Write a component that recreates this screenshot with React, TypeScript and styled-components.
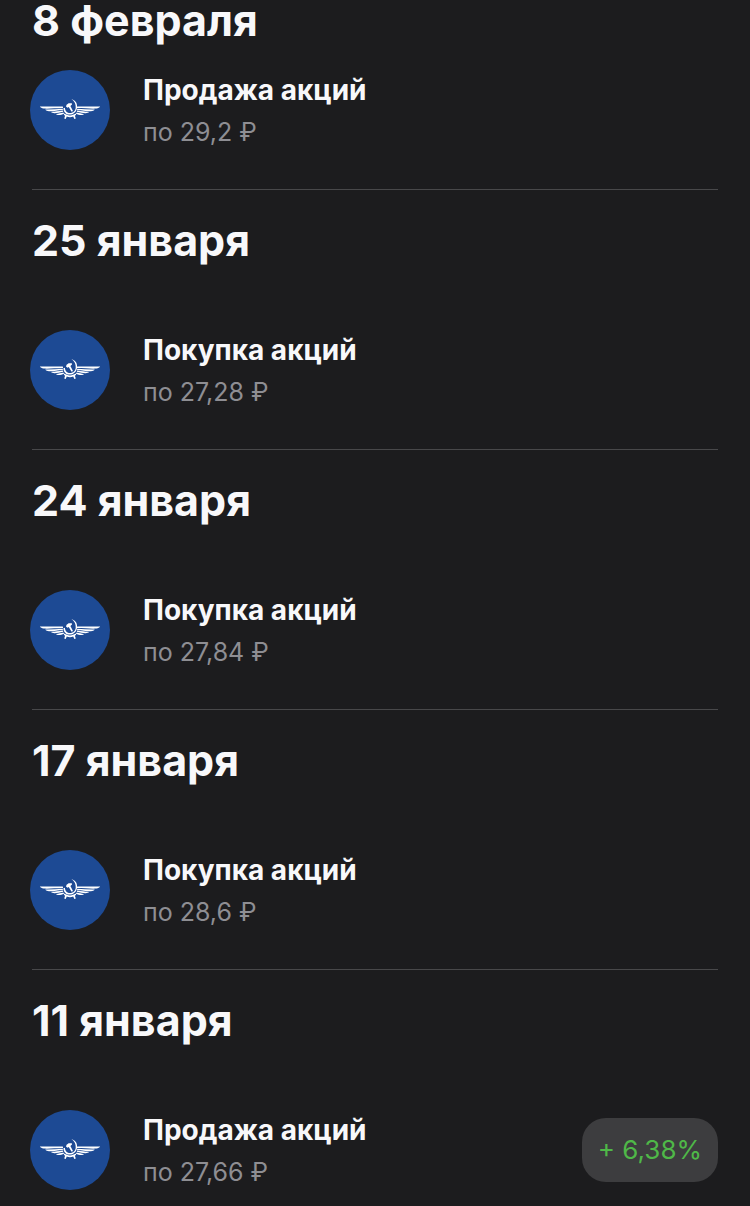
import React from 'react';
import styled, {createGlobalStyle} from 'styled-components';

const GlobalStyle = createGlobalStyle`
	* {
		box-sizing: border-box;
	}
	body {
		margin: 0;
		background: #1c1c1e;
		font-family: Inter, 'Liberation Sans', sans-serif;
	}
`;

const StyledFeed = styled.main`
	padding-bottom: 16px;
`;

const StyledDay = styled.section<{$pinned?: boolean}>`
	display: flex;
	flex-direction: column;
	gap: ${({$pinned}) => ($pinned ? '30px' : '70px')};
	padding-top: ${({$pinned}) => ($pinned ? '0' : '30px')};
`;

const StyledDate = styled.h2`
	margin: 0;
	padding: 0 32px;
	font-size: 43px;
	font-weight: 700;
	line-height: 40px;
	color: #f8f8fa;
`;

const StyledOperation = styled.div`
	display: flex;
	align-items: center;
	gap: 33px;
	padding: 0 32px 0 30px;
`;

const StyledLogo = styled.svg`
	display: block;
	flex: none;
	width: 80px;
	height: 80px;
	border-radius: 50%;
	background: #1d4a94;
`;

const StyledInfo = styled.div`
	flex: 1;
	min-width: 0;
`;

const StyledTitle = styled.h3`
	margin: 0;
	font-size: 28px;
	font-weight: 700;
	line-height: 40px;
	color: #f8f8fa;
`;

const StyledPrice = styled.p`
	margin: 0;
	padding-top: 4px;
	font-size: 25px;
	line-height: 36px;
	color: #8e8e93;
`;

const StyledProfit = styled.span`
	flex: none;
	padding: 14px 16px;
	border-radius: 24px;
	background: #3d3d3f;
	font-size: 26px;
	line-height: 36px;
	color: #4fb848;
`;

const StyledDivider = styled.hr`
	height: 1px;
	margin: 39px 32px 0;
	border: 0;
	background: #48484a;
`;

const wingPath = [
	'M9.800 36.500H32.800l.3 1.600C25 38.300 17 38.900 13.500 38.500 11.800 38.200 10.600 37.400 9.800 36.500z',
	'M15.200 39.500C21 39.700 27 39 32.800 38.700l.1 1.300C28 40.400 23 41.500 19 41.300 17.400 41.100 16 40.400 15.200 39.500z',
	'M20.800 42C25 42 29 41 32.900 40.600l.3 1.200C30 42.300 27 43.300 24.400 43.200 22.800 43.100 21.600 42.700 20.800 42z',
	'M26 43.900C28.500 43.800 31 43 33.400 42.500l.7 1.200C32 44.600 29.800 45.200 28 45 27 44.800 26.500 44.400 26 43.900z',
].join('');

function AeroflotLogo() {
	return (
		<StyledLogo viewBox='0 0 80 80' role='img' aria-label='Аэрофлот'>
			<g fill='#fff'>
				<path d={wingPath} />
				<path d={wingPath} transform='matrix(-1 0 0 1 80 0)' />
				{/* sickle */}
				<path d='M41.400 29C46 30.400 47.600 34.200 47 38 46.300 42.200 43.400 44.600 39.800 44.600 36 44.600 33.500 42 33.400 38.200L34.900 37.700C35.100 41 37.300 43 40 43 43.200 43 45.500 40.900 45.700 37.500 45.900 33.900 44.500 31.200 41.400 29z' />
				{/* hammer */}
				<path d='M36 36.500L36.600 34.700 38.600 33.300 41.800 33.200 42 34.600 40.400 35.900 43 41 41.600 41.800 38.700 36.900 37.500 37.800z' />
				{/* ribbon */}
				<path d='M34.300 43.600C37.800 46 42.200 46 45.700 43.600L46.200 44.700 44.900 45.700 45.800 48.500 44.300 49 43.200 46.600C41.200 47.300 38.800 47.300 36.800 46.600L35.700 49 34.200 48.500 35.100 45.700 33.800 44.700z' />
			</g>
		</StyledLogo>
	);
}

interface Operation {
	date: string;
	title: string;
	price: string;
	profit?: string;
}

const operations: Operation[] = [
	{date: '8 февраля', title: 'Продажа акций', price: '29,2'},
	{date: '25 января', title: 'Покупка акций', price: '27,28'},
	{date: '24 января', title: 'Покупка акций', price: '27,84'},
	{date: '17 января', title: 'Покупка акций', price: '28,6'},
	{date: '11 января', title: 'Продажа акций', price: '27,66', profit: '+ 6,38%'},
];

export default function App() {
	return (
		<>
			<GlobalStyle />
			<StyledFeed>
				{operations.map(({date, title, price, profit}, index) => (
					<React.Fragment key={date}>
						{index > 0 && <StyledDivider />}
						<StyledDay $pinned={index === 0}>
							<StyledDate>{date}</StyledDate>
							<StyledOperation>
								<AeroflotLogo />
								<StyledInfo>
									<StyledTitle>{title}</StyledTitle>
									<StyledPrice>по {price} ₽</StyledPrice>
								</StyledInfo>
								{profit && <StyledProfit>{profit}</StyledProfit>}
							</StyledOperation>
						</StyledDay>
					</React.Fragment>
				))}
			</StyledFeed>
		</>
	);
}
